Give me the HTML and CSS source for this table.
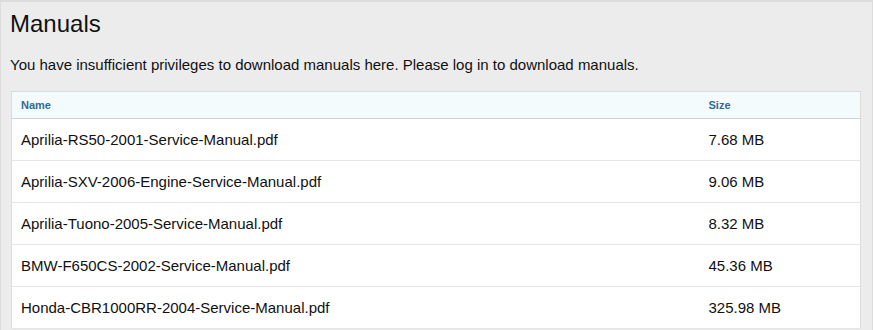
FILE: index.html
```html
<!DOCTYPE html>
<html lang="en">
<head>
  <meta charset="UTF-8">
  <meta name="viewport" content="width=device-width, initial-scale=1.0">
  <title>Manuals</title>
  <link rel="stylesheet" href="styles.css">
</head>
<body>
  <div class="page">

    <h1>Manuals</h1>
    <p class="notice">You have insufficient privileges to download manuals here. Please log in to download manuals.</p>

    <!-- Lista de manuais -->
    <table class="manuals">
      <thead>
        <tr>
          <th class="col-name">Name</th>
          <th class="col-size">Size</th>
        </tr>
      </thead>
      <tbody>
        <tr>
          <td>Aprilia-RS50-2001-Service-Manual.pdf</td>
          <td>7.68 MB</td>
        </tr>
        <tr>
          <td>Aprilia-SXV-2006-Engine-Service-Manual.pdf</td>
          <td>9.06 MB</td>
        </tr>
        <tr>
          <td>Aprilia-Tuono-2005-Service-Manual.pdf</td>
          <td>8.32 MB</td>
        </tr>
        <tr>
          <td>BMW-F650CS-2002-Service-Manual.pdf</td>
          <td>45.36 MB</td>
        </tr>
        <tr>
          <td>Honda-CBR1000RR-2004-Service-Manual.pdf</td>
          <td>325.98 MB</td>
        </tr>
      </tbody>
    </table>

  </div>
</body>
</html>
```

FILE: styles.css
```css
* {
  margin: 0;
  padding: 0;
  box-sizing: border-box;
}

body {
  font-family: 'Liberation Sans', Arial, sans-serif;
  background-color: #ececec;
  color: #111;
}

.page {
  width: 873px;
  height: 330px;
  border: 1px solid #dcdcdc;
  border-top-width: 2px;
  border-bottom: 0;
  padding: 8px 10px 0 9px;
  overflow: hidden;
}

h1 {
  font-size: 24px;
  font-weight: normal;
  line-height: 28px;
  margin-bottom: 17px;
  color: #111;
}

.notice {
  font-size: 15px;
  line-height: 20px;
  margin-bottom: 16px;
}

.manuals {
  width: 850px;
  margin-left: 1px;
  border-collapse: collapse;
  background-color: #fff;
  border: 1px solid #dcdcdc;
}

.manuals th {
  background-color: #f4fbfd;
  color: #2f6b93;
  font-size: 11px;
  font-weight: bold;
  text-align: left;
  height: 27px;
  padding: 0 9px;
  border-bottom: 1px solid #d4cfdb;
}

.manuals td {
  font-size: 15px;
  height: 42px;
  padding: 0 9px;
  border-bottom: 1px solid #e6e6e6;
}

.col-name {
  width: 688px;
}
```
